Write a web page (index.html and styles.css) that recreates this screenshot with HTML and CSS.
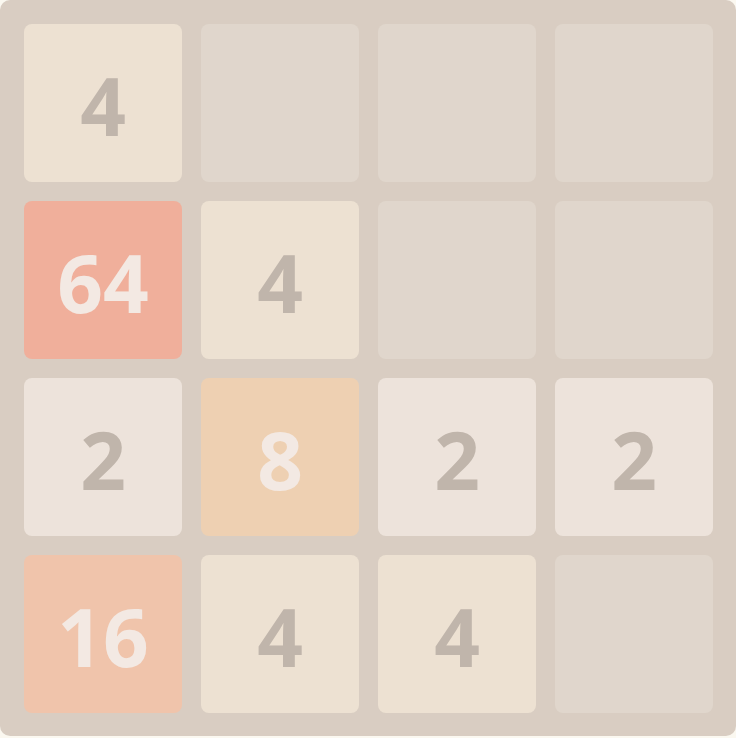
FILE: index.html
```html
<!DOCTYPE html>
<html>
<head>
  <title>2048</title>
  <link rel="stylesheet" href="styles.css">
</head>
<body>
  <div class="board">
    <div class="cell tile-4">4</div>
    <div class="cell"></div>
    <div class="cell"></div>
    <div class="cell"></div>

    <div class="cell tile-64">64</div>
    <div class="cell tile-4">4</div>
    <div class="cell"></div>
    <div class="cell"></div>

    <div class="cell tile-2">2</div>
    <div class="cell tile-8">8</div>
    <div class="cell tile-2">2</div>
    <div class="cell tile-2">2</div>

    <div class="cell tile-16">16</div>
    <div class="cell tile-4">4</div>
    <div class="cell tile-4">4</div>
    <div class="cell"></div>
  </div>
</body>
</html>
```

FILE: styles.css
```css
body {
  margin: 0;
  background: #fbf8f0;
  font-family: "Open Sans", Arial, sans-serif;
}

.board {
  width: 736px;
  height: 736px;
  box-sizing: border-box;
  padding: 24px 23px 23px 24px;
  background: #d9cdc2;
  border-radius: 10px;
  display: grid;
  grid-template-columns: repeat(4, 158px);
  grid-template-rows: repeat(4, 158px);
  gap: 19px;
}

.cell {
  background: #e0d6cc;
  border-radius: 8px;
  display: flex;
  align-items: center;
  justify-content: center;
  padding-top: 3px;
  box-sizing: border-box;
  font-size: 80px;
  font-weight: 700;
  color: #c0b5ab;
  line-height: 1;
}

.tile-2 {
  background: #ede3db;
}

.tile-4 {
  background: #ede1d2;
}

.tile-8 {
  background: #eed0b2;
  color: #f3e9e3;
}

.tile-16 {
  background: #f0c4ab;
  color: #f3e9e3;
}

.tile-64 {
  background: #f0af9b;
  color: #f3e9e3;
}
```
